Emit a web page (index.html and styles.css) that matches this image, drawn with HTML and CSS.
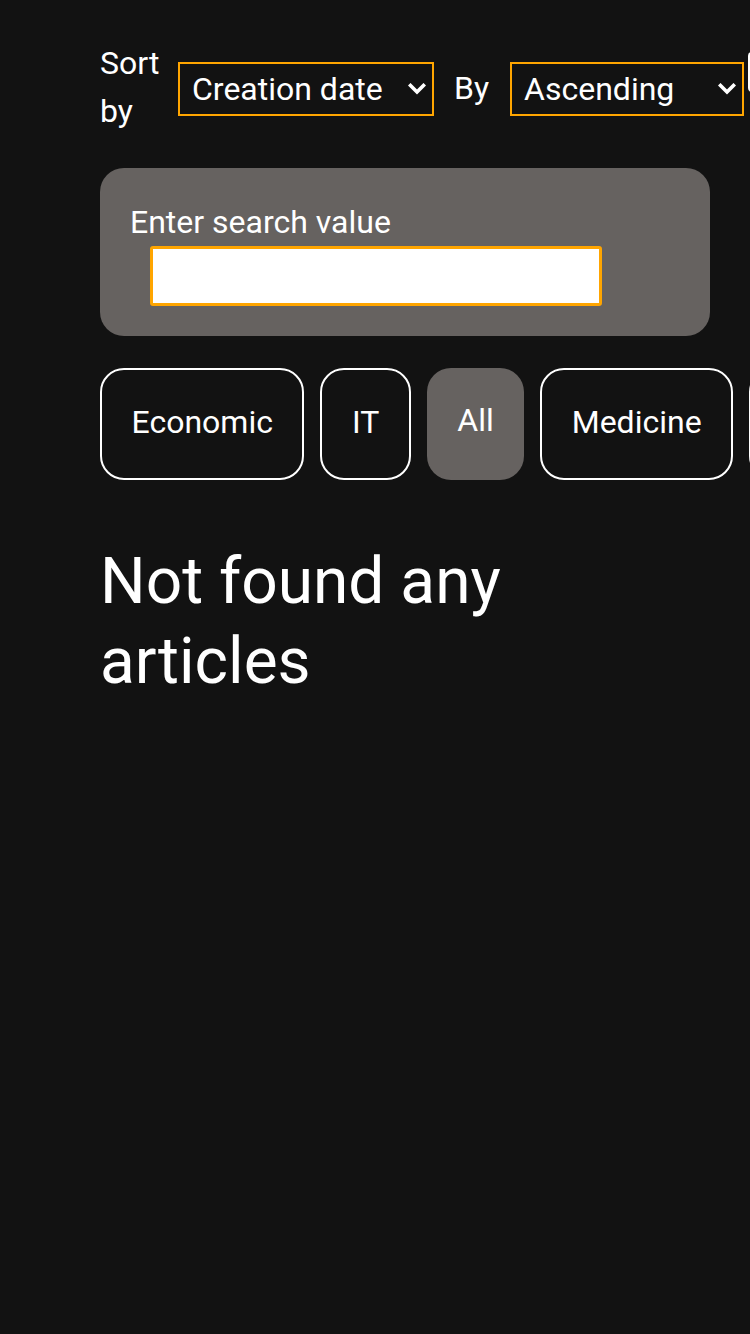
FILE: index.html
```html
<!DOCTYPE html>
<html lang="en">
<head>
<meta charset="utf-8">
<title>Articles</title>
<link rel="stylesheet" href="styles.css">
</head>
<body>
<div class="page">
  <div class="sort-row">
    <label class="sort-label" for="sortField">Sort by</label>
    <div class="select-wrap select-field">
      <select id="sortField" class="sort-select">
        <option>Creation date</option>
      </select>
      <svg class="chevron" width="18" height="13" viewBox="0 0 18 13" aria-hidden="true">
        <path d="M2.5 2.5 L9 9 L15.5 2.5" fill="none" stroke="#ffffff" stroke-width="3.6" stroke-linecap="square" stroke-linejoin="miter"/>
      </svg>
    </div>
    <label class="by-label" for="sortOrder">By</label>
    <div class="select-wrap select-order">
      <select id="sortOrder" class="sort-select">
        <option>Ascending</option>
      </select>
      <svg class="chevron" width="18" height="13" viewBox="0 0 18 13" aria-hidden="true">
        <path d="M2.5 2.5 L9 9 L15.5 2.5" fill="none" stroke="#ffffff" stroke-width="3.6" stroke-linecap="square" stroke-linejoin="miter"/>
      </svg>
    </div>
    <span class="extra-control"></span>
  </div>

  <div class="search-card">
    <label class="search-label" for="search">Enter search value</label>
    <input id="search" class="search-input" type="text">
  </div>

  <div class="chips">
    <button class="chip">Economic</button>
    <button class="chip">IT</button>
    <button class="chip chip-active">All</button>
    <button class="chip">Medicine</button>
    <button class="chip">Science</button>
  </div>

  <h1 class="empty">Not found any articles</h1>
</div>
</body>
</html>
```

FILE: styles.css
```css
html, body {
  margin: 0;
  padding: 0;
  background: #121212;
  color: #ffffff;
  font-family: Roboto, "Noto Sans", sans-serif;
  overflow: hidden;
}

.page {
  width: 750px;
  height: 1334px;
  box-sizing: border-box;
  padding: 39px 0 0 100px;
  overflow: hidden;
}

.sort-row {
  display: flex;
  align-items: flex-start;
  white-space: nowrap;
}

.sort-label {
  flex-shrink: 0;
  font-size: 32px;
  line-height: 48px;
  width: 60px;
  white-space: normal;
}

.select-wrap {
  position: relative;
  flex-shrink: 0;
  margin-top: 23px;
  height: 54px;
}

.sort-select {
  display: block;
  width: 100%;
  height: 54px;
  box-sizing: border-box;
  border: 2px solid #ffa500;
  border-radius: 0;
  background: #121212;
  color: #ffffff;
  font-family: Roboto, sans-serif;
  font-size: 32px;
  padding: 0 36px 0 12px;
  appearance: none;
  -webkit-appearance: none;
  outline: none;
}

.chevron {
  position: absolute;
  right: 8px;
  top: 21px;
  pointer-events: none;
}

.select-field {
  margin-left: 18px;
  width: 256px;
}

.by-label {
  flex-shrink: 0;
  font-size: 32px;
  line-height: 48px;
  margin: 25px 0 0 20px;
}

.select-order {
  margin-left: 21px;
  width: 234px;
}

.extra-control {
  flex-shrink: 0;
  display: block;
  width: 30px;
  height: 40px;
  margin: 13px 0 0 4px;
  box-sizing: border-box;
  border: 3px solid #ffffff;
  border-radius: 4px;
}

.search-card {
  margin-top: 33px;
  width: 610px;
  box-sizing: border-box;
  background: #666260;
  border-radius: 24px;
  padding: 30px;
}

.search-label {
  display: block;
  font-size: 32px;
  line-height: 48px;
}

.search-input {
  display: block;
  margin-left: 20px;
  width: 452px;
  height: 60px;
  box-sizing: border-box;
  border: 3px solid #ffa500;
  border-radius: 3px;
  background: #ffffff;
  outline: none;
  padding: 0 8px;
  font-size: 24px;
}

.chips {
  margin-top: 32px;
  display: flex;
  gap: 16px;
  white-space: nowrap;
}

.chip {
  flex-shrink: 0;
  height: 112px;
  box-sizing: border-box;
  padding: 0 29.5px 4px;
  border: 2px solid #ffffff;
  border-radius: 24px;
  background: #121212;
  color: #ffffff;
  font-family: Roboto, sans-serif;
  font-size: 32px;
}

.chip-active {
  border: none;
  background: #666260;
  padding: 0 30.5px 8px;
}

.empty {
  margin: 62px 0 0 0;
  max-width: 610px;
  font-size: 64px;
  font-weight: 400;
  line-height: 80px;
}
```
